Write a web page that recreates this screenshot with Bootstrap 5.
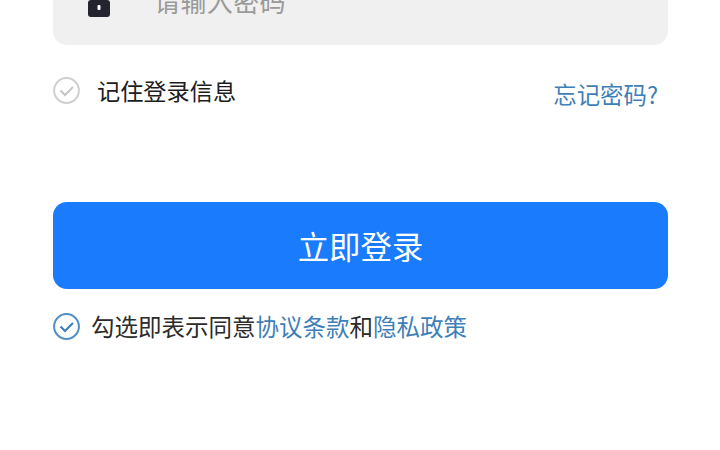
<!DOCTYPE html>
<html lang="zh">
<head>
<meta charset="utf-8">
<title>登录</title>
<link href="https://cdn.jsdelivr.net/npm/bootstrap@5.3.0/dist/css/bootstrap.min.css" rel="stylesheet">
<style>
html,body{height:450px;overflow:hidden;background:#fff;font-family:"Noto Sans CJK SC","Liberation Sans",sans-serif}
.login-wrap{padding:0 52px 0 53px;margin-top:-38px}
.pwd-box{height:83px;background:#f0f0f0;border-radius:14px;padding-left:34px;gap:43px}
.pwd-box svg{flex:none;margin-top:3px}
.pwd-ph{font-size:26px;letter-spacing:.4px;color:#9a9a9a;white-space:nowrap;line-height:1;margin-bottom:6px}
.remember-row{margin-top:26px;height:38px}
.remember-txt{font-size:23.2px;color:#1d1d1f;margin-left:17px;line-height:1;margin-top:2px}
.forgot{font-size:23.4px;color:#3f7fb8;text-decoration:none;margin-right:10px;line-height:1;margin-top:10px}
.go-btn{margin-top:93px;height:87px;width:100%;border:0;border-radius:14px;background:#1b7bfd;color:#fff;font-size:31.4px;line-height:1;padding:0}
.go-btn:hover,.go-btn:active{background:#1b7bfd!important;color:#fff!important}
.agree-row{margin-top:24px;font-size:23.5px;line-height:1;color:#2b2b2b;white-space:nowrap}
.agree-row a{color:#3f7fb8;text-decoration:none}
.agree-row svg{margin-right:11px;flex:none}
</style>
</head>
<body>
<main class="login-wrap">
  <div class="pwd-box d-flex align-items-center">
    <svg width="24" height="24" viewBox="0 0 24 24"><path d="M7 7V5a5 5 0 0 1 10 0v2" fill="none" stroke="#24242e" stroke-width="2"/><rect x="1" y="7" width="22" height="17" rx="3" fill="#24242e"/><rect x="10.5" y="12" width="3" height="5" rx="1" fill="#fff"/></svg>
    <span class="pwd-ph">请输入密码</span>
  </div>
  <div class="remember-row d-flex align-items-center">
    <svg width="27" height="27" viewBox="0 0 27 27"><circle cx="13.5" cy="13.5" r="12.4" fill="none" stroke="#cfcfcf" stroke-width="2"/><path d="M7.5 13.5l4.5 4.5 8-8" fill="none" stroke="#c4c4c4" stroke-width="2"/></svg>
    <span class="remember-txt">记住登录信息</span>
    <a class="forgot ms-auto" href="#">忘记密码?</a>
  </div>
  <button class="btn go-btn" type="button">立即登录</button>
  <div class="agree-row d-flex align-items-center">
    <svg width="27" height="27" viewBox="0 0 27 27"><circle cx="13.5" cy="13.5" r="12.4" fill="none" stroke="#4f8fc9" stroke-width="2"/><path d="M7.5 13.5l4.5 4.5 8-8" fill="none" stroke="#3f7fb8" stroke-width="2.2"/></svg>
    <span>勾选即表示同意<a href="#">协议条款</a>和<a href="#">隐私政策</a></span>
  </div>
</main>
<script src="https://cdn.jsdelivr.net/npm/bootstrap@5.3.0/dist/js/bootstrap.bundle.min.js"></script>
</body>
</html>
